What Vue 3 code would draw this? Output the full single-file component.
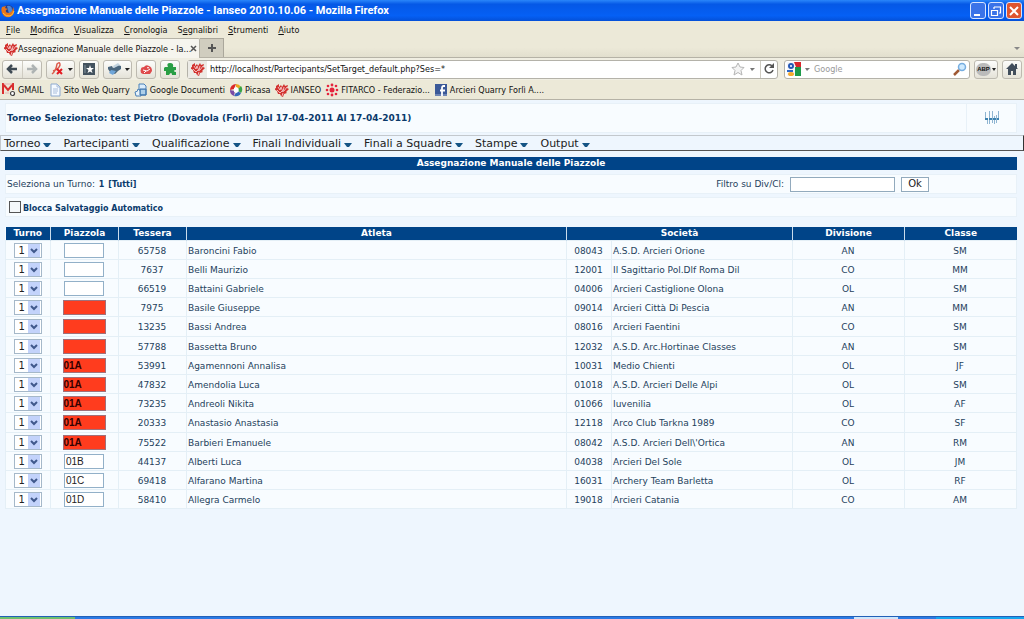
<script setup>
import { ref } from 'vue'

const browserMenu = [
  ['F', 'ile'], ['M', 'odifica'], ['V', 'isualizza'], ['C', 'ronologia'],
  ['S', 'egnalibri', 'e'], ['S', 'trumenti'], ['A', 'iuto'],
]
const bookmarks = [
  { icon: 'gmail', text: 'GMAIL' },
  { icon: 'page', text: 'Sito Web Quarry' },
  { icon: 'docs', text: 'Google Documenti' },
  { icon: 'picasa', text: 'Picasa' },
  { icon: 'ianseo', text: 'IANSEO' },
  { icon: 'fitarco', text: 'FITARCO - Federazio...' },
  { icon: 'facebook', text: 'Arcieri Quarry Forlì A....' },
]
const siteMenu = ['Torneo', 'Partecipanti', 'Qualificazione', 'Finali Individuali', 'Finali a Squadre', 'Stampe', 'Output']
const filter = ref('')
const locked = ref(false)
const url = ref('http://localhost/Partecipants/SetTarget_default.php?Ses=*')
const search = ref('')

const make = (target, bad, id, name, code, club, div, cls) => ({ turn: '1', target, bad, id, name, code, club, div, cls })
const rows = ref([
  make('', false, '65758', 'Baroncini Fabio', '08043', 'A.S.D. Arcieri Orione', 'AN', 'SM'),
  make('', false, '7637', 'Belli Maurizio', '12001', 'Il Sagittario Pol.Dlf Roma Dil', 'CO', 'MM'),
  make('', false, '66519', 'Battaini Gabriele', '04006', 'Arcieri Castiglione Olona', 'OL', 'SM'),
  make('', true, '7975', 'Basile Giuseppe', '09014', 'Arcieri Città Di Pescia', 'AN', 'MM'),
  make('', true, '13235', 'Bassi Andrea', '08016', 'Arcieri Faentini', 'CO', 'SM'),
  make('', true, '57788', 'Bassetta Bruno', '12032', 'A.S.D. Arc.Hortinae Classes', 'AN', 'SM'),
  make('01A', true, '53991', 'Agamennoni Annalisa', '10031', 'Medio Chienti', 'OL', 'JF'),
  make('01A', true, '47832', 'Amendolia Luca', '01018', 'A.S.D. Arcieri Delle Alpi', 'OL', 'SM'),
  make('01A', true, '73235', 'Andreoli Nikita', '01066', 'Iuvenilia', 'OL', 'AF'),
  make('01A', true, '20333', 'Anastasio Anastasia', '12118', 'Arco Club Tarkna 1989', 'CO', 'SF'),
  make('01A', true, '75522', 'Barbieri Emanuele', '08042', "A.S.D. Arcieri Dell\\'Ortica", 'AN', 'RM'),
  make('01B', false, '44137', 'Alberti Luca', '04038', 'Arcieri Del Sole', 'OL', 'JM'),
  make('01C', false, '69418', 'Alfarano Martina', '16031', 'Archery Team Barletta', 'OL', 'RF'),
  make('01D', false, '58410', 'Allegra Carmelo', '19018', 'Arcieri Catania', 'CO', 'AM'),
])
</script>

<template>
  <div class="window">
    <svg class="defs" width="0" height="0" aria-hidden="true">
      <symbol id="ianseo" viewBox="0 0 14 14">
        <path d="M1 3l3-2v3l2-2 1 2 2-3 1 2 3-1-1 3 2 1-3 3 1 1-3 1-1 3-2-1-1-2-2 0-1-3-3-2 2-1z" fill="#d2322f" />
        <path d="M3 4l2 3 1-3 2 5 1-5M12 4l-3 4M2 7l3 3 2-2M7 13l1-3" stroke="#fbdcdc" stroke-width=".8" fill="none" />
      </symbol>
      <symbol id="gmail" viewBox="0 0 14 14">
        <path d="M1 11V1l5 6 5-6v6" fill="none" stroke="#d92e2e" stroke-width="2" />
        <path d="M2 1h8M3 10h4" stroke="#e4b3b3" fill="none" />
        <circle cx="10.500" cy="10.500" r="2" fill="#fff" stroke="#444" stroke-width="1.200" />
      </symbol>
      <symbol id="page" viewBox="0 0 14 14">
        <path d="M3 1h6l3 3v9H3z" fill="#f4f9ff" stroke="#8da9cf" />
        <path d="M9 1v3h3M5 6h5M5 8h5M5 10h4" stroke="#a9bddb" fill="none" />
      </symbol>
      <symbol id="docs" viewBox="0 0 14 14">
        <path d="M5 1h5l2 2v9H5z" fill="#d9ecfb" stroke="#4a80b8" />
        <path d="M1 9q3 0 3-3l3 2v5H2z" fill="#e8f3fa" stroke="#4a80b8" />
        <path d="M6 6h6v6H6z" fill="#75a9d3" stroke="#3a6fa8" />
        <path d="M7 8h4M7 10h4" stroke="#e6f5ff" />
      </symbol>
      <symbol id="picasa" viewBox="0 0 14 14">
        <path d="M7 1a6 6 0 0 1 5 3L7 6z" fill="#e9a51d" />
        <path d="M12 3a6 6 0 0 1 0 7L8 7z" fill="#39a548" />
        <path d="M12 10a6 6 0 0 1-7 3l3-5z" fill="#3467bb" />
        <path d="M5 13a6 6 0 0 1-4-6l5 1z" fill="#7b4ba5" />
        <path d="M1 7a6 6 0 0 1 6-6l-2 5z" fill="#db2727" />
        <path d="M5 5l3-1 2 3-2 3-3-1z" fill="#fff" />
      </symbol>
      <symbol id="fitarco" viewBox="0 0 14 14">
        <g fill="#e5253d">
          <circle cx="7" cy="7" r="2.500" /><circle cx="7" cy="2" r="1.400" /><circle cx="11" cy="3" r="1.300" />
          <circle cx="12" cy="7" r="1.300" /><circle cx="11" cy="11" r="1.300" /><circle cx="7" cy="12" r="1.400" />
          <circle cx="3" cy="11" r="1.300" /><circle cx="2" cy="7" r="1.300" /><circle cx="3" cy="3" r="1.300" />
        </g>
      </symbol>
      <symbol id="facebook" viewBox="0 0 14 14">
        <path d="M1 1h12v12H1z" fill="#3b5998" />
        <path d="M1 11h12v2H1z" fill="#6d84b4" />
        <path d="M11 3H9.500Q8 3 8 5v8M6 7.500h5" fill="none" stroke="#fff" stroke-width="1.800" />
      </symbol>
    </svg>

    <header class="titlebar">
      <svg width="14" height="14" viewBox="0 0 14 14">
        <circle cx="7" cy="7" r="6" fill="#233f8f" />
        <path d="M6 2q4-1 5 3 1 4-3 5" fill="#4d86d5" />
        <path d="M1 3q-2 5 2 9 5 3 9-1 2-4 0-8 0 5-4 6-4 0-3-3l2-1-3-1 1-2z" fill="#e9751c" />
        <path d="M2 9q3 4 7 3 3-1 4-5" stroke="#ffc63c" fill="none" />
      </svg>
      <h1>Assegnazione Manuale delle Piazzole - Ianseo 2010.10.06 - Mozilla Firefox</h1>
      <div class="controls">
        <button type="button" aria-label="Riduci"><svg width="16" height="16"><path d="M4 11h6v2H4z" fill="#fff" /></svg></button>
        <button type="button" aria-label="Ripristina"><svg width="16" height="16"><path d="M6 4h7M6 4v2M12.500 4v6H11M3 7.500h7M3.500 7v5.500h6V7" stroke="#fff" stroke-width="1.200" fill="none" /></svg></button>
        <button type="button" class="close" aria-label="Chiudi"><svg width="16" height="16"><path d="M4 4l8 8M12 4l-8 8" stroke="#fff" stroke-width="2" /></svg></button>
      </div>
    </header>

    <nav class="menubar" aria-label="Menu del browser">
      <button v-for="item in browserMenu" :key="item[0] + item[1]" type="button"><template v-if="item[2]">S<u>e</u>gnalibri</template><template v-else><u>{{ item[0] }}</u>{{ item[1] }}</template></button>
    </nav>

    <div class="tabs">
      <div class="tab">
        <svg width="14" height="14"><use href="#ianseo" /></svg>
        <span>Assegnazione Manuale delle Piazzole - Ia...</span>
        <button type="button" aria-label="Chiudi scheda"><svg width="7" height="8"><path d="M1 1l5 5M6 1L1 6" stroke="#555" stroke-width="1.500" /></svg></button>
      </div>
      <button type="button" class="newtab" aria-label="Nuova scheda"><svg width="10" height="10"><path d="M5 1v8M1 5h8" stroke="#555" stroke-width="2" /></svg></button>
      <svg class="alltabs" width="6" height="4"><path d="M0 0h6L3 3z" fill="#888" /></svg>
    </div>

    <div class="toolbar">
      <div class="tool pair">
        <button type="button" aria-label="Indietro"><svg width="14" height="12"><path d="M12 6H4M7 2L3 6l4 4" stroke="#3e4a54" stroke-width="2.500" fill="none" /></svg></button>
        <button type="button" aria-label="Avanti"><svg width="14" height="12"><path d="M2 6h8M7 2l4 4-4 4" stroke="#aeb3b3" stroke-width="2.500" fill="none" /></svg></button>
      </div>
      <button type="button" class="tool wide" aria-label="Script">
        <svg width="16" height="16"><path d="M3 13Q7 10 8 3q3-3 3 1-1 4-7 6" stroke="#dc5b4c" stroke-width="1.500" fill="none" /><path d="M8 8l5 5M13 8l-5 5" stroke="#e31b23" stroke-width="2" /></svg>
        <svg width="5" height="3"><path d="M0 0h5L2 3z" fill="#222" /></svg>
      </button>
      <button type="button" class="tool" aria-label="Segnalibri"><svg width="14" height="14"><path d="M1 1h12v12H1z" fill="#43525f" /><path d="M3 3v8" stroke="#8292a0" /><path d="M8 3l1 3h3L9.500 8l1 3L8 9.500 5.500 11l1-3L4 6h3z" fill="#fff" /></svg></button>
      <button type="button" class="tool wide" aria-label="Stampa">
        <svg width="16" height="14"><path d="M2 5l4-1 1 2 5-3 3 1v3l-3 2-3 3-5-2-2-3z" fill="#4b677e" /><path d="M7 4l5-3 2 2-6 3z" fill="#c4d4df" /><path d="M5 8l5 1-3 4-4-2z" fill="#6fa6da" /></svg>
        <svg width="5" height="3"><path d="M0 0h5L2 3z" fill="#222" /></svg>
      </button>
      <button type="button" class="tool" aria-label="Posta"><svg width="14" height="14"><path d="M2 11q-1-3 0-4 0-2 3-2 2-3 5-1 3 1 3 5l-2 3H4z" fill="#df4a4c" /><path d="M4 8l4 1 3-2M5 11l2-2M8 6q1-1 2 0" stroke="#fff" fill="none" /></svg></button>
      <button type="button" class="tool" aria-label="Componenti"><svg width="14" height="14"><path d="M2 5h3Q3 1 7 1t3 4h3v3q-2 0-2 1t2 1v3H9q0-2-1-2t-2 2H3v-4H1V6z" fill="#299e45" /></svg></button>
      <div class="address">
        <span class="site"><svg width="14" height="14"><use href="#ianseo" /></svg></span>
        <input v-model="url" type="text" aria-label="Indirizzo">
        <button type="button" aria-label="Aggiungi segnalibro"><svg width="14" height="14"><path d="M7 1l2 4 4 .5-3 3 1 4.500-4-2.500L3 13l1-4.500-3-3L5 5z" fill="#f4f4f4" stroke="#b5b5b5" /></svg></button>
        <svg class="drop" width="5" height="3"><path d="M0 0h5L2 3z" fill="#777" /></svg>
        <button type="button" class="reload" aria-label="Ricarica"><svg width="12" height="12"><path d="M9 3a4 4 0 1 0 1 4" fill="none" stroke="#555" stroke-width="1.500" /><path d="M6 5h5V0z" fill="#555" /></svg></button>
      </div>
      <div class="search">
        <svg width="14" height="14"><path d="M0 0h14v14H0z" fill="#f5f6fa" /><path d="M7 0h7v5H9z" fill="#d8262c" /><path d="M8 5h6v9H8z" fill="#1d9a4a" /><circle cx="4" cy="4" r="2" fill="#fff" stroke="#2457b5" stroke-width="2" /><path d="M0 8h6v2H0z" fill="#2b66c5" /><ellipse cx="4" cy="12" rx="3" ry="2" fill="#f5a92d" /></svg>
        <svg class="drop" width="5" height="3"><path d="M0 0h5L2 3z" fill="#777" /></svg>
        <input v-model="search" type="text" placeholder="Google" aria-label="Cerca con Google">
        <button type="button" aria-label="Cerca"><svg width="14" height="14"><path d="M1 13l5-5" stroke="#a05a35" stroke-width="2.500" /><circle cx="9" cy="5" r="3.500" fill="#cfeaff" stroke="#77aee0" stroke-width="1.500" /></svg></button>
      </div>
      <button type="button" class="tool abp" aria-label="Adblock Plus"><span>ABP</span><svg width="4" height="3"><path d="M0 0h4L2 3z" fill="#222" /></svg></button>
      <button type="button" class="tool" aria-label="Pagina iniziale"><svg width="14" height="14"><path d="M7 1l6 6h-2v6H8V9H6v4H3V7H1z" fill="#414e5c" /><path d="M10 2h2v4h-2z" fill="#414e5c" /></svg></button>
    </div>

    <nav class="bookmarks" aria-label="Segnalibri">
      <a v-for="b in bookmarks" :key="b.icon" href="#"><svg width="14" height="14"><use :href="'#' + b.icon" /></svg><span>{{ b.text }}</span></a>
    </nav>

    <main>
      <section class="tournament">
        <strong>Torneo Selezionato: test Pietro (Dovadola (Forlì) Dal 17-04-2011 Al 17-04-2011)</strong>
        <div class="mark">
          <svg width="16" height="16" viewBox="0 0 16 16"><path d="M1.500 2v8M3.500 8v6M5.500 1v13M8.500 1v12M10.500 6v8M12.500 5v8M14.500 1v9" stroke="#8fb5d2" fill="none" /><path d="M1 9h14" stroke="#3d82af" stroke-width="2" stroke-dasharray="3 1" /></svg>
        </div>
      </section>

      <nav class="sitemenu" aria-label="Menu gara">
        <a v-for="m in siteMenu" :key="m" href="#">{{ m }}<svg width="8" height="5"><path d="M0 0h8L5 4H3z" fill="#145485" /></svg></a>
      </nav>

      <div class="content">
        <h2>Assegnazione Manuale delle Piazzole</h2>
        <div class="band turns">
          <div>Seleziona un Turno: <a href="#">1</a> <a href="#">[Tutti]</a></div>
          <form class="filter" @submit.prevent>
            <label for="filter">Filtro su Div/Cl:</label>
            <input id="filter" v-model="filter" type="text">
            <button type="submit">Ok</button>
          </form>
        </div>
        <div class="band lock">
          <input id="lock" v-model="locked" type="checkbox"><label for="lock">Blocca Salvataggio Automatico</label>
        </div>

        <table>
          <colgroup>
            <col class="c-turn"><col class="c-target"><col class="c-id"><col>
            <col class="c-code"><col class="c-club"><col class="c-div"><col class="c-div">
          </colgroup>
          <thead>
            <tr>
              <th>Turno</th><th>Piazzola</th><th>Tessera</th><th>Atleta</th>
              <th colspan="2">Società</th><th>Divisione</th><th>Classe</th>
            </tr>
          </thead>
          <tbody>
            <tr v-for="r in rows" :key="r.id">
              <td class="mid field">
                <span class="pick">
                  <select v-model="r.turn" :aria-label="'Turno di ' + r.name"><option>1</option></select>
                  <svg width="12" height="13"><path d="M0 0h12v13H0z" fill="#c3d3fb" /><path d="M3 5l3 3 3-3" stroke="#40598c" stroke-width="2" fill="none" /></svg>
                </span>
              </td>
              <td class="mid field"><input v-model="r.target" type="text" class="target" :class="{ bad: r.bad }" :aria-label="'Piazzola di ' + r.name"></td>
              <td class="mid">{{ r.id }}</td>
              <td>{{ r.name }}</td>
              <td class="mid">{{ r.code }}</td>
              <td>{{ r.club }}</td>
              <td class="mid">{{ r.div }}</td>
              <td class="mid">{{ r.cls }}</td>
            </tr>
          </tbody>
        </table>
      </div>
    </main>

    <footer class="taskbar"><i class="start"></i><i class="task"></i><i class="tray"></i></footer>
  </div>
</template>

<style>
html, body { margin: 0; background: #eef6fe; }
</style>

<style scoped>
.window {
  display: flex;
  flex-direction: column;
  min-height: 100vh;
  font: 9px/14px "DejaVu Sans Condensed", "DejaVu Sans", sans-serif;
  color: #111;
  background: #ece9d8;
}
.window *, .window *::before { box-sizing: border-box; }
.defs { position: absolute; }
svg { flex: none; display: block; }
button, input, select { font: inherit; color: inherit; padding: 0; margin: 0; border: 0; background: none; min-width: 0; }
button { display: flex; align-items: center; justify-content: center; }
a { color: inherit; text-decoration: none; }

.titlebar {
  display: flex;
  align-items: center;
  gap: 2px;
  height: 21px;
  padding: 0 2px 0 1px;
  background: linear-gradient(#2a86fa, #0558e6 20%, #0560f5 75%, #0450d8);
}
.titlebar h1 {
  flex: 1;
  margin: 0;
  font: bold 11px/16px Roboto, sans-serif;
  color: #fff;
  white-space: nowrap;
}
.controls { display: flex; gap: 2px; }
.controls button { width: 16px; height: 17px; border: 1px solid #d6e4ff; border-radius: 3px; background: #3a73e8; }
.controls .close { background: #de5530; }

.menubar { display: flex; align-items: center; height: 17px; padding: 0 6px; gap: 10px; }

.tabs {
  display: flex;
  height: 20px;
  padding-right: 4px;
  border-bottom: 1px solid #b5b2a6;
  background: linear-gradient(#ece9d8 50%, #e2dfce);
}
.tab {
  display: flex;
  align-items: center;
  width: 200px;
  height: 20px;
  padding: 0 4px;
  background: #f6f5ee;
  border: 1px solid #b5b2a6;
  border-width: 1px 1px 0 0;
  border-radius: 0 2px 0 0;
}
.tab span { flex: 1; white-space: nowrap; }
.newtab { width: 24px; background: #d0cdbf; border: 1px solid #aaa79b; border-width: 1px 1px 0 0; }
.alltabs { margin: 9px 0 0 auto; }

.toolbar { display: flex; align-items: center; gap: 4px; height: 22px; padding: 0 2px; background: #f0eee2; }
.tool { width: 20px; height: 19px; border: 1px solid #bdbab0; border-radius: 3px; background: linear-gradient(#fdfdfb, #e4e2d8); }
.tool.wide { width: 29px; gap: 3px; }
.pair { display: flex; width: 40px; }
.pair button { flex: 1; }
.pair button + button { border-left: 1px solid #cfccc2; }
.address, .search {
  display: flex;
  align-items: center;
  height: 19px;
  border: 1px solid #b4b2a9;
  border-radius: 3px;
  background: #fff;
}
.address { flex: 1; margin: 0 2px 0 3px; }
.address input { flex: 1; padding-left: 3px; }
.site { display: flex; width: 19px; height: 17px; align-items: center; justify-content: center; background: #ecebe6; }
.drop { margin: 0 5px; }
.reload { width: 17px; height: 17px; border-left: 1px solid #cfccc2; }
.search { width: 186px; padding: 0 2px; }
.search input { flex: 1; }
.search input::placeholder { color: #999; opacity: 1; }
.search .drop { margin: 0 4px; }
.tool.abp { width: 24px; gap: 1px; }
.abp span { width: 15px; border-radius: 7px; background: #bbb; font: bold 6px/13px "Liberation Sans", sans-serif; }

.bookmarks { display: flex; align-items: center; gap: 4px; height: 20px; padding: 1px 2px 0; border-bottom: 1px solid #b5b2a6; }
.bookmarks a { display: flex; align-items: center; gap: 2px; white-space: nowrap; }

main { flex: 1; padding-top: 3px; background: #eef6fe; font: 9px/12px "DejaVu Sans", sans-serif; color: #24415c; }
.tournament { display: flex; align-items: center; height: 30px; margin: 0 7px 0 5px; background: #f8fcff; border: 1px solid #e8f1f8; }
.tournament strong { flex: 1; padding-left: 1px; color: #0a3a6b; }
.mark { display: flex; align-items: center; justify-content: center; width: 50px; height: 28px; border-left: 1px solid #e8f1f8; }
.sitemenu {
  display: flex;
  align-items: center;
  gap: 12px;
  height: 16px;
  margin-top: 2px;
  padding: 1px 0 0 3px;
  border: 1px solid #c3c8cd;
  border-right-color: #333;
  border-bottom-color: #555;
  font-size: 11px;
  color: #222;
}
.sitemenu a { display: flex; align-items: center; gap: 3px; white-space: nowrap; }
.sitemenu svg { margin-top: 3px; }
.content { padding: 6px 7px 0 5px; }
h2 { margin: 0 0 4px; font: bold 9px/13px "DejaVu Sans", sans-serif; color: #fff; background: #048; text-align: center; }
.band { display: flex; align-items: center; height: 20px; padding: 0 1px; margin-bottom: 3px; background: #f8fcff; border: 1px solid #e8f1f8; }
.turns { justify-content: space-between; }
.turns a { margin-left: 1px; font-size: 8px; font-weight: bold; color: #0a3a6b; }
.filter { display: flex; align-items: center; gap: 6px; margin-right: 86px; }
.filter input { width: 105px; height: 15px; border: 1px solid #92aabd; background: #fff; font-size: 10px; }
.filter button { width: 28px; height: 15px; border: 1px solid #92aabd; background: #fff; font-size: 10px; color: #222; }
.lock { margin-bottom: 10px; padding-top: 4px; font-size: 8px; font-weight: bold; color: #0a3a6b; gap: 2px; }
.lock input { appearance: none; width: 12px; height: 12px; margin: 0 0 4px 2px; border: 1px solid #555; background: #f5f8fa; }
.lock input:checked { background: #048; }

table { width: 100%; table-layout: fixed; border-collapse: collapse; background: #f8fcff; }
.c-turn { width: 45px; }
.c-target { width: 68px; }
.c-id { width: 68px; }
.c-code { width: 45px; }
.c-club { width: 181px; }
.c-div { width: 112px; }
th { height: 13px; padding: 0; background: #048; color: #fff; font: bold 9px/13px "DejaVu Sans", sans-serif; }
th + th { border-left: 1px solid #c9dcec; }
td { height: 19px; padding: 1px 2px 0 1px; border: 1px solid #e4eff6; white-space: nowrap; }
td.field { padding-top: 0; }
tr:nth-child(5n) td { height: 20px; }
.mid { text-align: center; }
.pick { display: flex; align-items: center; width: 28px; height: 15px; margin: 0 auto; padding-right: 1px; border: 1px solid #a5b8c9; background: #fff; }
.pick select { appearance: none; flex: 1; height: 13px; padding-left: 4px; font: 10px/13px "DejaVu Sans", sans-serif; color: #222; }
.pick svg { pointer-events: none; }
.target { display: block; width: 40px; height: 15px; margin: 0 auto; padding-left: 1px; border: 1px solid #92b0c8; background: #fff; font: 10px/13px "Liberation Sans", sans-serif; color: #222; }
.target.bad { width: 43px; padding-left: 0; background: #ff3c1e; border-color: #a0707a; font-weight: bold; color: #300; }

.taskbar { display: flex; height: 3px; background: #2b7ae4; border-top: 1px solid #2260b8; }
.start { width: 75px; background: #6fc06f; }
.task { width: 44px; margin-left: auto; background: #cfe6fb; }
.tray { width: 88px; margin-left: 38px; background: #16a5ee; }
</style>
